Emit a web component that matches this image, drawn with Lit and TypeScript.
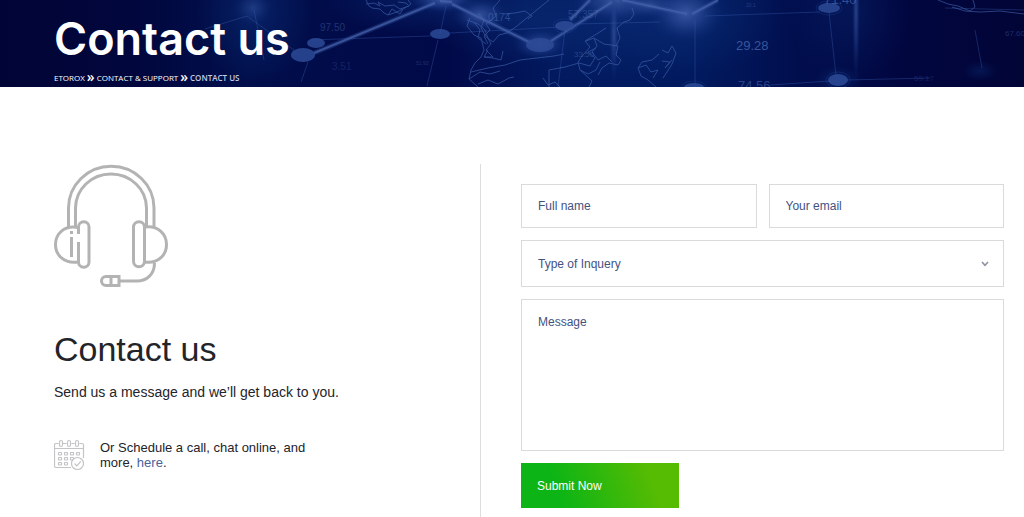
import { LitElement, css, html, svg } from "lit";
import { customElement } from "lit/decorators.js";

const coastlines = [
  "366,0 369,6 372,8 380,9 384,13 388,15 397,12 405,8 411,4 408,0",
  "366,4 374,3 380,6 378,2 385,6 394,5 400,9 409,6 406,3 398,2",
  "388,15 392,9 400,14 403,9",
  "470,18 467,26 474,35 481,38 484,50 481,57 475,63 471,70 469,79 478,87",
  "467,20 478,24 485,30 488,38 491,44 486,50 493,57 484,57 488,50",
  "500,0 493,8 496,16 486,24 490,30 484,36 488,44",
  "478,13 484,20 481,28 486,37 493,42 499,35 507,33 517,26 528,17 549,0",
  "474,22 480,30 478,38 486,44",
  "504,14 515,13 525,11 532,16 528,19",
  "484,57 493,58 501,60 503,51",
  "471,72 488,68 505,65 520,60 554,56 564,54",
  "469,79 480,72 490,74 500,71",
  "478,84 488,80 498,84 509,78 514,77",
  "549,87 549,70 565,67 579,63 590,66",
  "543,78 548,85 555,82 560,87",
  "606,28 595,35 585,41 590,47 583,55 578,62 580,70 592,81 589,87",
  "586,41 594,38 604,44 618,46 616,55 621,60 618,65 609,63 602,68 598,75",
  "594,38 597,46 592,52 598,60 606,56 612,62",
  "590,66 595,58 588,52 596,48",
  "580,70 588,74 596,70 600,62",
  "632,8 634,14 630,20 624,22 617,28 620,38 616,46",
  "662,50 668,53 672,46 676,53 672,64 667,72 663,78",
  "659,54 652,60 642,62 638,68 641,76 648,80 656,87",
  "638,68 646,65 651,72 658,70 653,78",
  "662,61 670,62 665,68 672,60",
  "938,0 948,4 958,6 970,11 975,7 973,0",
  "952,7 965,11 980,12 1000,11 1024,14",
];

const dimLines = [
  [440, 34, 446, 6], [438, 40, 427, 86], [310, 40, 430, 36], [450, 33, 560, 27],
  [565, 30, 558, 87], [575, 24, 660, 22], [695, 20, 695, 87], [705, 16, 820, 12],
  [829, 12, 836, 76], [770, 85, 830, 81], [846, 80, 930, 78], [975, 30, 982, 68],
  [301, 82, 308, 62], [945, 8, 1024, 10],
];

const brightLines = [
  [314, 53, 435, 3], [452, 4, 531, 43], [551, 41, 612, 2], [622, 0, 687, 14],
  [692, 14, 718, 0], [570, 20, 590, 0], [440, 1, 452, 2],
];

const nodes = [
  [303, 55, 12, 7], [316, 43, 9, 5], [440, 34, 10, 5], [540, 45, 14, 7],
  [565, 26, 10, 5], [829, 8, 11, 5], [838, 80, 10, 6], [694, 87, 10, 4],
];

const quotes: [number, number, number, number, string][] = [
  [320, 31, 10, 0.38, "97.50"], [332, 70, 10, 0.22, "3.51"], [488, 21, 10, 0.5, "0174"],
  [568, 18, 10, 0.4, "57.357"], [574, 57, 8, 0.45, "33.50"], [736, 50, 13, 0.7, "29.28"],
  [738, 90, 13, 0.5, "74.56"], [824, 4, 13, 0.6, "71.40"], [1005, 36, 8, 0.35, "67.60"],
  [416, 65, 5, 0.35, "51.93"], [914, 81, 8, 0.22, "59.17"], [746, 7, 5, 0.4, "20.1"],
];

const line = ([x1, y1, x2, y2]: number[]) =>
  svg`<line x1=${x1} y1=${y1} x2=${x2} y2=${y2} />`;

@customElement("market-backdrop")
export class MarketBackdrop extends LitElement {
  static styles = css`
    :host { display: block; }
    .art { display: block; width: 100%; height: 100%; }
    .quote { font-family: "Liberation Sans", Arial, sans-serif; fill: #4f72b8; }
  `;

  render() {
    return html`
      <svg class="art" viewBox="0 0 1024 87" preserveAspectRatio="xMidYMid slice" aria-hidden="true">
        <defs>
          <linearGradient id="base">
            <stop offset="0" stop-color="#010536" />
            <stop offset="0.12" stop-color="#01063c" />
            <stop offset="0.24" stop-color="#010f4c" />
            <stop offset="0.34" stop-color="#010b49" />
            <stop offset="0.44" stop-color="#010a49" />
            <stop offset="0.54" stop-color="#02195e" />
            <stop offset="0.68" stop-color="#011a5e" />
            <stop offset="0.78" stop-color="#010e4e" />
            <stop offset="0.88" stop-color="#010640" />
            <stop offset="1" stop-color="#010536" />
          </linearGradient>
          <radialGradient id="glow">
            <stop offset="0" stop-color="#3f5ba6" stop-opacity="0.9" />
            <stop offset="0.45" stop-color="#2a4795" stop-opacity="0.6" />
            <stop offset="1" stop-color="#0b2a74" stop-opacity="0" />
          </radialGradient>
          <radialGradient id="haze">
            <stop offset="0" stop-color="#0a2c74" stop-opacity="0.6" />
            <stop offset="1" stop-color="#0a2c74" stop-opacity="0" />
          </radialGradient>
        </defs>
        <rect width="1024" height="87" fill="url(#base)" />
        <g fill="url(#haze)">
          <ellipse cx="254" cy="12" rx="60" ry="70" />
          <ellipse cx="440" cy="0" rx="120" ry="36" />
          <ellipse cx="530" cy="20" rx="100" ry="45" />
          <ellipse cx="620" cy="20" rx="110" ry="70" />
          <ellipse cx="695" cy="15" rx="90" ry="60" />
          <ellipse cx="850" cy="10" rx="60" ry="75" opacity="0.6" />
          <ellipse cx="838" cy="80" rx="24" ry="14" />
          <ellipse cx="980" cy="71" rx="18" ry="10" opacity="0.7" />
        </g>
        <g fill="url(#glow)">
          <ellipse cx="253" cy="8" rx="20" ry="18" opacity="0.5" />
          <ellipse cx="443" cy="0" rx="35" ry="13" />
          <ellipse cx="480" cy="15" rx="28" ry="18" opacity="0.9" />
          <ellipse cx="540" cy="44" rx="28" ry="16" opacity="0.8" />
          <ellipse cx="616" cy="0" rx="46" ry="24" />
          <ellipse cx="652" cy="5" rx="36" ry="14" opacity="0.7" />
          <ellipse cx="686" cy="13" rx="38" ry="30" />
          <ellipse cx="614" cy="35" rx="5" ry="48" opacity="0.7" />
          <ellipse cx="856" cy="10" rx="4" ry="75" opacity="0.7" />
        </g>
        <g stroke="#3c62b4" stroke-width="1" opacity="0.35">${dimLines.map(line)}</g>
        <g stroke="#3a58a4" stroke-width="5" opacity="0.3">${brightLines.map(line)}</g>
        <g stroke="#4562ab" stroke-width="2" opacity="0.75">${brightLines.map(line)}</g>
        <path d="M247 16 294 50M247 16 205 29M254 10 264 60" fill="none" stroke="#3454a0" opacity="0.45" />
        <g fill="none" stroke="#4467b2" stroke-width="1" opacity="0.6">
          ${coastlines.map((points) => svg`<polyline points=${points} />`)}
        </g>
        <g fill="#2d4b97" opacity="0.85">
          ${nodes.map(([x, y, rx, ry]) => svg`<ellipse cx=${x} cy=${y} rx=${rx} ry=${ry} />`)}
        </g>
        <g fill="none" stroke="#1d3f8d" opacity="0.4">
          ${nodes.slice(4).map(([x, y, rx, ry]) => svg`<ellipse cx=${x} cy=${y} rx=${rx + 2} ry=${ry + 2} />`)}
        </g>
        ${quotes.map(([x, y, size, alpha, label]) =>
          svg`<text class="quote" x=${x} y=${y} font-size=${size} opacity=${alpha}>${label}</text>`)}
      </svg>
    `;
  }
}

@customElement("app-root")
export class AppRoot extends LitElement {
  static styles = css`
    :host {
      display: flex;
      flex-direction: column;
      min-height: 100vh;
      background: #fff;
      color: #23242a;
      font-family: "Liberation Sans", Arial, sans-serif;
    }
    * { box-sizing: border-box; }
    h1, h2, p { margin: 0; font-weight: 400; }
    .banner {
      position: relative;
      padding: 12px 54px 2px;
      background: #010536;
      color: #fff;
    }
    .backdrop { position: absolute; inset: 0; }
    .banner-text { position: relative; }
    .title {
      font: 600 45px/54px Inter, sans-serif;
    }
    .crumbs {
      display: flex;
      gap: 2px;
      margin-top: 5px;
      font: 400 8px/14px "Open Sans", sans-serif;
      text-transform: uppercase;
    }
    .crumbs a { color: #fff; text-decoration: none; }
    .arrow { font-size: 14px; font-weight: 600; line-height: 12px; }
    .current { color: #c3cce2; font-weight: 600; }
    .content {
      flex: 1;
      display: grid;
      grid-template-columns: 480fr 544fr;
      padding-top: 77px;
    }
    .intro { padding-left: 54px; }
    .headset { display: block; width: 115px; height: 124px; }
    .subtitle { margin-top: 37px; font-size: 34px; line-height: 48px; }
    .lead { margin-top: 9px; font-size: 14px; line-height: 20px; }
    .schedule { display: flex; gap: 15px; margin-top: 37px; }
    .calendar { flex: none; width: 31px; height: 32px; }
    .schedule-text { max-width: 220px; padding-top: 1px; font-size: 13px; line-height: 15px; }
    .schedule-text a { color: #4a629b; text-decoration: none; }
    .form-side {
      padding: 20px 20px 8px 40px;
      border-left: 1px solid #dedede;
    }
    .form { display: grid; grid-template-columns: 1fr 1fr; gap: 12px; }
    .field {
      display: block;
      width: 100%;
      height: 44px;
      margin: 0;
      padding: 0 16px;
      border: 1px solid #dadada;
      border-radius: 0;
      outline: 0;
      background: #fff;
      color: #43537f;
      font: 400 12px/16px "Liberation Sans", Arial, sans-serif;
      appearance: none;
    }
    .field::placeholder { color: #43537f; opacity: 1; }
    .wide { grid-column: 1 / -1; }
    .picker { display: grid; align-items: center; }
    .picker > * { grid-area: 1 / 1; }
    .picker .field { height: 47px; }
    .chevron {
      justify-self: end;
      width: 8px;
      height: 6px;
      margin-right: 15px;
      pointer-events: none;
    }
    .message { height: 152px; padding: 14px 16px; resize: none; }
    .submit {
      justify-self: start;
      width: 158px;
      height: 45px;
      padding: 0 16px;
      border: 0;
      background: linear-gradient(70deg, #0cb515 25%, #55bb03 80%);
      color: #fff;
      font: 400 12px/16px "Liberation Sans", Arial, sans-serif;
      text-align: left;
      cursor: pointer;
    }
  `;

  render() {
    return html`
      <header class="banner">
        <market-backdrop class="backdrop"></market-backdrop>
        <div class="banner-text">
          <h1 class="title">Contact us</h1>
          <nav class="crumbs" aria-label="Breadcrumb">
            <a href="#">eToroX</a>
            <span class="arrow">»</span>
            <a href="#">Contact &amp; Support</a>
            <span class="arrow">»</span>
            <span class="current">Contact us</span>
          </nav>
        </div>
      </header>
      <main class="content">
        <section class="intro">
          ${this.headset()}
          <h2 class="subtitle">Contact us</h2>
          <p class="lead">Send us a message and we’ll get back to you.</p>
          <div class="schedule">
            ${this.calendar()}
            <p class="schedule-text">
              Or Schedule a call, chat online, and more, <a href="#">here</a>.
            </p>
          </div>
        </section>
        <section class="form-side">
          <form class="form" @submit=${(e: Event) => e.preventDefault()}>
            <input class="field" type="text" name="name" placeholder="Full name" aria-label="Full name" />
            <input class="field" type="email" name="email" placeholder="Your email" aria-label="Your email" />
            <div class="picker wide">
              <select class="field" name="type" aria-label="Type of Inquery">
                <option>Type of Inquery</option>
              </select>
              <svg class="chevron" viewBox="0 0 8 6" aria-hidden="true">
                <path d="M1 1 4 4.3 7 1" fill="none" stroke="#8d929e" stroke-width="1.6" />
              </svg>
            </div>
            <textarea class="field message wide" name="message" placeholder="Message" aria-label="Message"></textarea>
            <button class="submit wide" type="submit">Submit Now</button>
          </form>
        </section>
      </main>
    `;
  }

  private headset() {
    return html`
      <svg class="headset" viewBox="54 164 115 124" fill="none" stroke="#b3b3b4" stroke-width="3" aria-hidden="true">
        <path d="M68.5 227V208a42.5 41.5 0 0 1 85.5 0V227" />
        <path d="M75.5 226V208a35.5 34 0 0 1 71 0V226" />
        <path d="M78 227.5C64 225 55.5 234 55.5 244.5S64 264 78 262" />
        <path d="M78.5 234V227a5.2 5.2 0 0 1 10.5 0V262a5.2 5.2 0 0 1-10.5 0V242" />
        <path d="M71.5 237V257M71.5 231V234" />
        <rect x="133.5" y="221.8" width="11" height="45" rx="5.5" />
        <path d="M145 227C158 225 166.5 234 166.5 244.5S158 264 145 262" />
        <path d="M154.5 263C154.5 274 147 281 137 281H119" />
        <path d="M119 276.5H106a4.5 4.5 0 0 0 0 9H119ZM111 277V285.5" />
      </svg>
    `;
  }

  private calendar() {
    const dots = [
      [58, 453], [64, 453], [70, 453], [76, 453],
      [58, 458], [64, 458], [70, 458],
      [58, 463], [64, 463],
    ];
    return html`
      <svg class="calendar" viewBox="54 439 31 32" fill="none" stroke="#c3c4c6" stroke-width="1.2" aria-hidden="true">
        <path d="M58.5 443.5H56q-1.500 0-1.500 1.500V466q0 1.500 1.500 1.500H71M63 443.500H66.500M71.500 443.500H74.500M79.500 443.500H82q1.500 0 1.500 1.500V458M54.500 448.500H83.500" />
        <rect x="59.5" y="440.5" width="3" height="6" rx="1.5" />
        <rect x="67.5" y="440.5" width="3" height="6" rx="1.5" />
        <rect x="75.5" y="440.5" width="3" height="6" rx="1.5" />
        ${dots.map(([x, y]) => svg`<rect x=${x + 0.5} y=${y - 0.5} width="3" height="2.5" rx="0.5" />`)}
        <circle cx="77.5" cy="463.5" r="6" fill="#fff" />
        <path d="m74.5 463.5 2.3 2.3 4-4.500" />
      </svg>
    `;
  }
}
